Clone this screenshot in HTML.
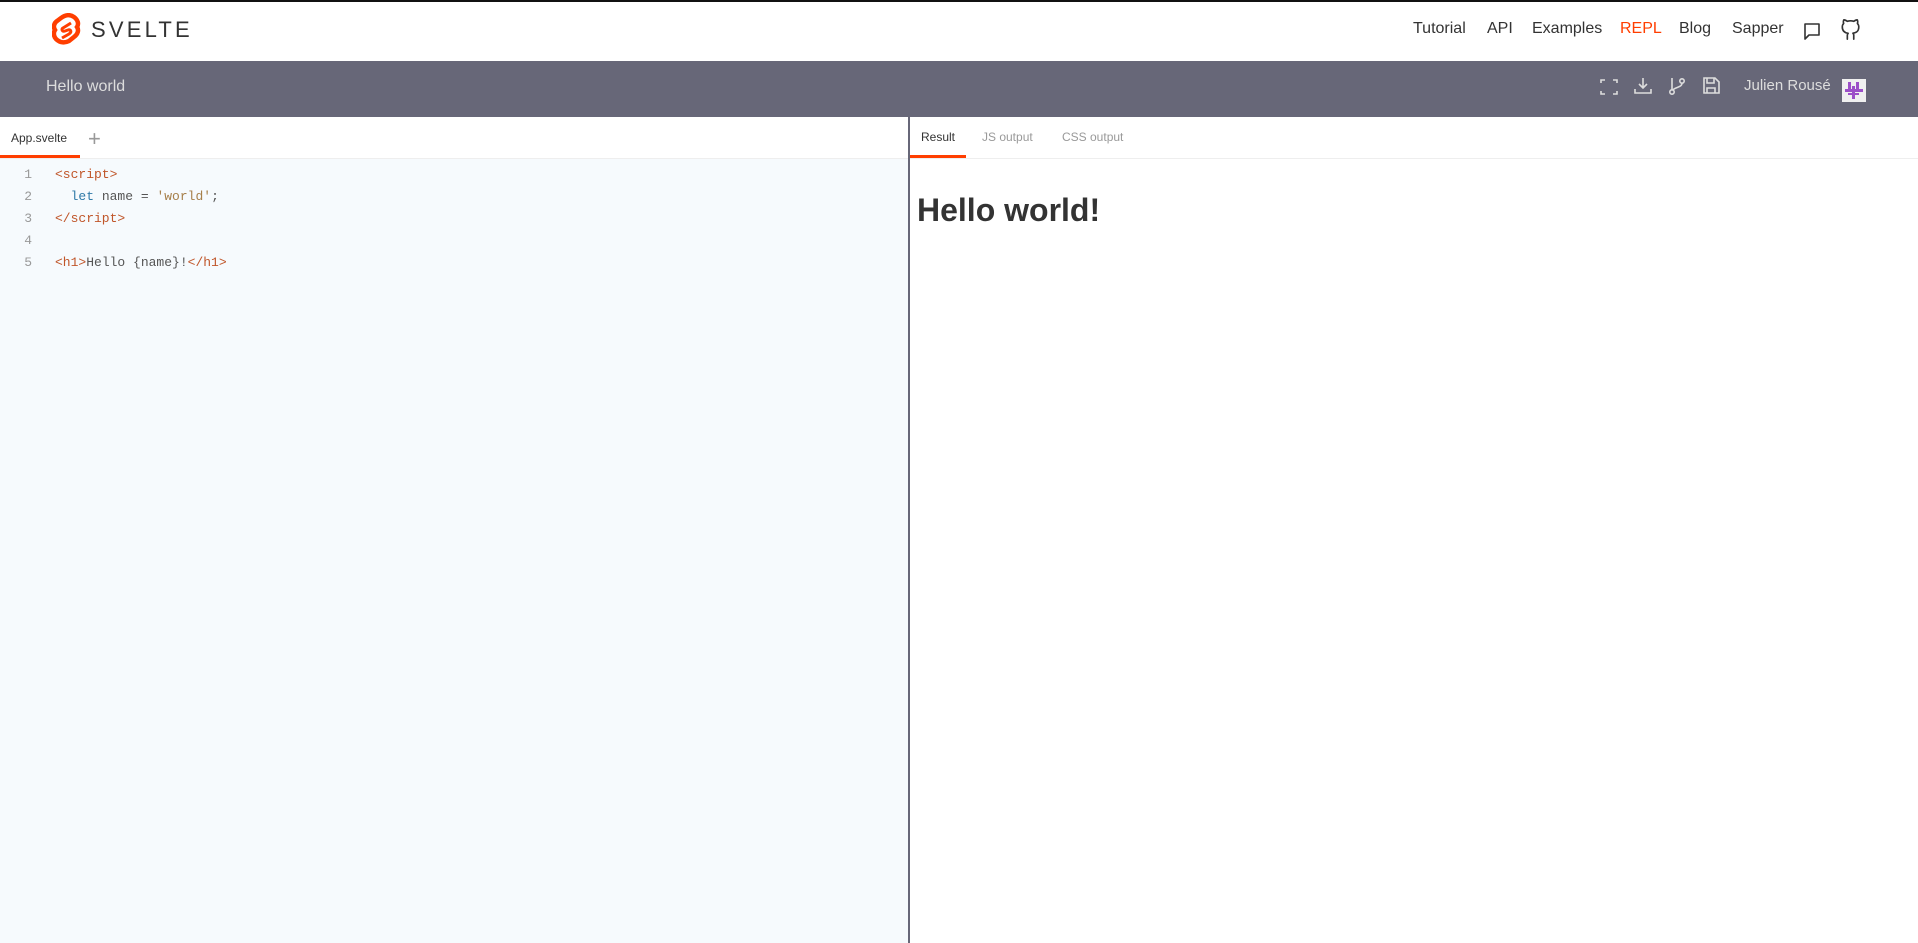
<!DOCTYPE html>
<html><head><meta charset="utf-8"><style>
*{margin:0;padding:0;box-sizing:border-box}
body{width:1918px;height:943px;overflow:hidden;background:#fff;font-family:"Liberation Sans",sans-serif;position:relative}
.a{position:absolute;white-space:nowrap}
.nav{top:0;left:0;width:1918px;height:61px;border-top:2px solid #111;background:#fff;box-shadow:0 1px 3px rgba(0,0,0,.15)}
.nl{font-size:16px;color:#333;top:20px}
.bar{top:61px;left:0;width:1918px;height:56px;background:#676778}
.code{top:159px;left:0;width:908px;height:784px;background:#f6fafd}
.mono{font-family:"Liberation Mono",monospace;font-size:13px}
.ln{color:#999;left:22px;width:10px;text-align:right}
.t{color:#c0562a}.k{color:#2f7aa8}.s{color:#a67f4a}.p{color:#555}
</style></head><body>
<div class="a nav"></div>
<svg class="a" style="left:52px;top:13px" width="29" height="35" viewBox="0 0 29 35"><path d="M22 4 C18 1 13 2 9 5 L5 8 C2 10 1 14 3 17 C1 20 2 24 4 26 C8 30 13 30 17 28 L22 24 C26 21 27 17 25 14 C27 11 26 7 22 4 Z" fill="none" stroke="#ff3e00" stroke-width="4.5"/><path d="M19 10 L11 15 C9 16 10 19 13 18 L16 17 C19 16 20 19 17 21 L10 25" fill="none" stroke="#ff3e00" stroke-width="3"/></svg>
<div class="a" style="left:91px;top:17px;font-size:22px;letter-spacing:3.2px;color:#333">SVELTE</div>
<div class="a nl" style="left:1413px">Tutorial</div>
<div class="a nl" style="left:1487px">API</div>
<div class="a nl" style="left:1532px">Examples</div>
<div class="a nl" style="left:1620px;color:#ff3e00">REPL</div>
<div class="a nl" style="left:1679px">Blog</div>
<div class="a nl" style="left:1732px">Sapper</div>
<svg class="a" style="left:1802px;top:21px" width="20" height="20" viewBox="0 0 20 20"><path d="M3 3 H17 V14 H7 L3 18 Z" fill="none" stroke="#333" stroke-width="1.6" stroke-linejoin="round"/></svg>
<svg class="a" style="left:1840px;top:19px" width="22" height="22" viewBox="0 0 24 24"><path d="M15 22v-3.9a3.4 3.4 0 0 0-.9-2.6c3.1-.4 6.4-1.5 6.4-7A5.4 5.4 0 0 0 19 4.8 5 5 0 0 0 18.9 1S17.7.7 15 2.5a13.4 13.4 0 0 0-7 0C5.3.7 4.1 1 4.1 1A5 5 0 0 0 4 4.8a5.4 5.4 0 0 0-1.5 3.8c0 5.4 3.3 6.6 6.4 7a3.4 3.4 0 0 0-.9 2.6V22" fill="none" stroke="#333" stroke-width="1.8" stroke-linecap="round" stroke-linejoin="round"/></svg>
<div class="a bar"></div>
<div class="a" style="left:46px;top:78px;font-size:16px;color:#ddd">Hello world</div>
<svg class="a" style="left:1600px;top:78px" width="18" height="18" viewBox="0 0 18 18" fill="none" stroke="#ddd" stroke-width="1.6"><path d="M1 5V2h4M13 2h4v3M17 13v3h-4M5 16H1v-3"/></svg>
<svg class="a" style="left:1634px;top:77px" width="18" height="18" viewBox="0 0 18 18" fill="none" stroke="#ddd" stroke-width="1.6"><path d="M9 1v10M5 7l4 4 4-4M1 12v4h16v-4"/></svg>
<svg class="a" style="left:1668px;top:77px" width="18" height="19" viewBox="0 0 18 19" fill="none" stroke="#ddd" stroke-width="1.6"><circle cx="4" cy="15" r="2.2"/><circle cx="14" cy="4" r="2.2"/><path d="M4 1v12M14 6c0 5-8 4-9.5 7.5"/></svg>
<svg class="a" style="left:1702px;top:77px" width="18" height="18" viewBox="0 0 18 18" fill="none" stroke="#ddd" stroke-width="1.6"><path d="M2 1h11l4 4v11H2z"/><path d="M5 1v5h7V1M5 16v-5h8v5"/></svg>
<div class="a" style="left:1744px;top:77px;font-size:15px;color:#ddd">Julien Rousé</div>
<div class="a" style="left:1842px;top:79px;width:24px;height:23px;background:#f0f0f0"></div>
<svg class="a" style="left:1845px;top:82px" width="18" height="17" viewBox="0 0 18 17" fill="#9c4fc8"><rect x="3" y="0" width="3" height="8"/><rect x="11" y="0" width="3" height="8"/><rect x="0" y="7" width="18" height="3"/><rect x="7" y="4" width="3" height="13"/><rect x="3" y="11" width="11" height="2"/></svg>
<div class="a" style="left:0;top:117px;width:908px;height:42px;border-bottom:1px solid #eee"></div>
<div class="a" style="left:11px;top:131px;font-size:12px;color:#333">App.svelte</div>
<div class="a" style="left:0;top:155px;width:80px;height:3px;background:#ff3e00"></div>
<div class="a" style="left:88px;top:126px;font-size:22px;color:#999;font-weight:300">+</div>
<div class="a code"></div>
<div class="a" style="left:908px;top:117px;width:2px;height:826px;background:#676778"></div>
<div class="a" style="left:910px;top:117px;width:1008px;height:42px;border-bottom:1px solid #eee"></div>
<div class="a" style="left:921px;top:130px;font-size:12px;color:#333">Result</div>
<div class="a" style="left:982px;top:130px;font-size:12px;color:#999">JS output</div>
<div class="a" style="left:1062px;top:130px;font-size:12px;color:#999">CSS output</div>
<div class="a" style="left:910px;top:155px;width:56px;height:3px;background:#ff3e00"></div>
<div class="a" style="left:917px;top:192px;font-size:32px;font-weight:bold;color:#333">Hello world!</div>
<div class="a mono ln" style="top:167px">1</div>
<div class="a mono ln" style="top:189px">2</div>
<div class="a mono ln" style="top:211px">3</div>
<div class="a mono ln" style="top:233px">4</div>
<div class="a mono ln" style="top:255px">5</div>
<div class="a mono" style="left:55px;top:167px"><span class="t">&lt;script&gt;</span></div>
<div class="a mono" style="left:55px;top:189px">&nbsp;&nbsp;<span class="k">let</span> <span class="p">name =</span> <span class="s">'world'</span><span class="p">;</span></div>
<div class="a mono" style="left:55px;top:211px"><span class="t">&lt;/script&gt;</span></div>
<div class="a mono" style="left:55px;top:255px"><span class="t">&lt;h1&gt;</span><span class="p">Hello {name}!</span><span class="t">&lt;/h1&gt;</span></div>
</body></html>
